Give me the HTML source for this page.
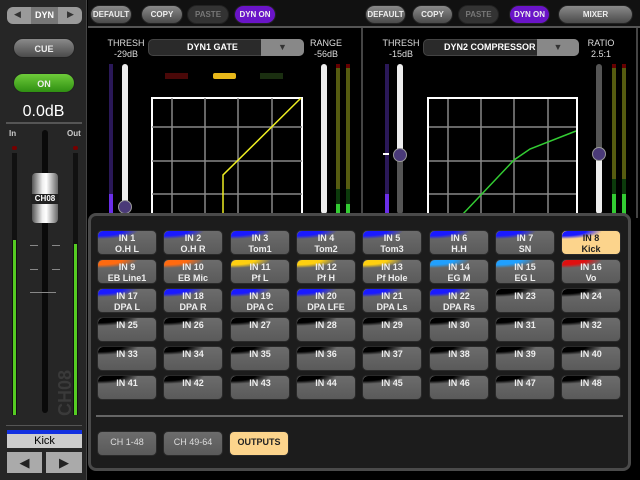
<!DOCTYPE html><html><head><style>
*{margin:0;padding:0;box-sizing:border-box}
body{width:640px;height:480px;background:#000;position:relative;overflow:hidden;font-family:"Liberation Sans",sans-serif;color:#fff}
.a{position:absolute}
.pill{position:absolute;border-radius:10px;font-size:9px;text-align:center;line-height:20px;color:#eee;background:linear-gradient(#8a8a8a,#4a4a4a);border:1px solid #222;font-weight:bold}
.grid{position:absolute;border:2px solid #fff;border-bottom:none}
.lbl{position:absolute;font-size:9px;text-align:center;color:#ddd;line-height:11px}
.b{position:absolute;width:60px;height:25px;border-radius:5px;background:linear-gradient(#6c6c6c,#5a5a5a);border:1px solid #2a2a2a;font-size:9px;font-weight:bold;text-align:center;line-height:11px;padding-top:2px;color:#eee;overflow:hidden}
.b i{position:absolute;left:0;top:0;width:40px;height:10px;border-radius:5px 0 0 0}
.b span{position:relative}
</style></head><body>
<div class="a" style="left:0;top:0;width:87px;height:480px;background:#262626;border-right:1px solid #444"></div>
<div class="a" style="left:7px;top:7px;width:75px;height:17px;border-radius:6px;background:#9a9a9a;"></div>
<div class="a" style="left:31px;top:7px;width:27px;height:17px;background:#777;font-size:9px;line-height:17px;text-align:center;font-weight:bold">DYN</div>
<div class="a" style="left:14px;top:9px;font-size:9px;color:#333">◀</div>
<div class="a" style="left:67px;top:9px;font-size:9px;color:#333">▶</div>
<div class="pill" style="left:13px;top:38px;width:62px;height:20px;">CUE</div>
<div class="pill" style="left:13px;top:73px;width:62px;height:20px;background:linear-gradient(#6ecb3a,#2f8f12)">ON</div>
<div class="a" style="left:0;top:103px;width:87px;text-align:center;font-size:16px">0.0dB</div>
<div class="a" style="left:6px;top:122px;width:76px;height:2px;background:#555"></div>
<div class="a" style="left:9px;top:129px;font-size:8px;font-weight:bold;color:#ccc">In</div>
<div class="a" style="left:67px;top:129px;font-size:8px;font-weight:bold;color:#ccc">Out</div>
<div class="a" style="left:12px;top:146px;width:5px;height:4px;background:#700;border-radius:2px"></div>
<div class="a" style="left:73px;top:146px;width:5px;height:4px;background:#700;border-radius:2px"></div>
<div class="a" style="left:12px;top:153px;width:5px;height:262px;background:#111"></div>
<div class="a" style="left:13px;top:240px;width:3px;height:175px;background:#5c2"></div>
<div class="a" style="left:73px;top:153px;width:5px;height:262px;background:#111"></div>
<div class="a" style="left:74px;top:244px;width:3px;height:171px;background:#5c2"></div>
<div class="a" style="left:42px;top:130px;width:6px;height:283px;background:#0a0a0a;border-radius:3px"></div>
<div class="a" style="left:30px;top:245px;width:8px;height:1px;background:#888"></div><div class="a" style="left:52px;top:245px;width:8px;height:1px;background:#888"></div>
<div class="a" style="left:30px;top:269px;width:8px;height:1px;background:#888"></div><div class="a" style="left:52px;top:269px;width:8px;height:1px;background:#888"></div>
<div class="a" style="left:30px;top:292px;width:26px;height:1px;background:#888"></div>
<div class="a" style="left:32px;top:173px;width:26px;height:50px;border-radius:4px;background:linear-gradient(90deg,#555,#eee 40%,#fff 55%,#666)"></div>
<div class="a" style="left:31px;top:194px;width:28px;height:10px;background:#222;font-size:8px;text-align:center;line-height:10px;font-weight:bold">CH08</div>
<div class="a" style="font-size:18px;font-weight:bold;color:#3a3a3a;transform:rotate(-90deg);transform-origin:left top;top:416px;left:55px">CH08</div>
<div class="a" style="left:6px;top:425px;width:76px;height:1px;background:#555"></div>
<div class="a" style="left:7px;top:430px;width:75px;height:4px;background:#1230e0"></div>
<div class="a" style="left:7px;top:434px;width:75px;height:14px;background:#ccc;color:#000;font-size:11px;text-align:center;line-height:14px">Kick</div>
<div class="a" style="left:7px;top:452px;width:35px;height:21px;background:#aaa;color:#222;font-size:13px;text-align:center;line-height:21px">◀</div>
<div class="a" style="left:46px;top:452px;width:36px;height:21px;background:#aaa;color:#222;font-size:13px;text-align:center;line-height:21px">▶</div>
<div class="a" style="left:88px;top:0;width:552px;height:28px;background:#111;border-bottom:2px solid #555"></div>
<div class="pill" style="left:90px;top:5px;width:42px;height:19px;line-height:17px;font-size:8px">DEFAULT</div>
<div class="pill" style="left:141px;top:5px;width:42px;height:19px;line-height:17px;font-size:8px">COPY</div>
<div class="pill" style="left:187px;top:5px;width:42px;height:19px;line-height:17px;font-size:8px;color:#777;background:#333">PASTE</div>
<div class="pill" style="left:234px;top:5px;width:42px;height:19px;line-height:17px;font-size:8px;background:#6a14c8">DYN ON</div>
<div class="pill" style="left:365px;top:5px;width:41px;height:19px;line-height:17px;font-size:8px">DEFAULT</div>
<div class="pill" style="left:412px;top:5px;width:41px;height:19px;line-height:17px;font-size:8px">COPY</div>
<div class="pill" style="left:458px;top:5px;width:41px;height:19px;line-height:17px;font-size:8px;color:#777;background:#333">PASTE</div>
<div class="pill" style="left:509px;top:5px;width:41px;height:19px;line-height:17px;font-size:8px;background:#6a14c8">DYN ON</div>
<div class="pill" style="left:558px;top:5px;width:75px;height:19px;line-height:17px;font-size:8px">MIXER</div>
<div class="a" style="left:361px;top:28px;width:2px;height:190px;background:#444"></div>
<div class="a" style="left:636px;top:28px;width:2px;height:190px;background:#444"></div>
<div class="lbl" style="left:104px;top:38px;width:44px">THRESH<br>-29dB</div>
<div class="lbl" style="left:306px;top:38px;width:40px">RANGE<br>-56dB</div>
<div class="a" style="left:148px;top:39px;width:156px;height:17px;border-radius:5px;background:#2a2a2a;border:1px solid #444;font-size:9px;font-weight:bold;line-height:15px;padding-left:38px">DYN1 GATE</div>
<div class="a" style="left:261px;top:39px;width:43px;height:17px;border-radius:0 5px 5px 0;background:#888;color:#333;font-size:9px;text-align:center;line-height:17px">▼</div>
<div class="a" style="left:109px;top:64px;width:4px;height:150px;background:#2a1858"></div>
<div class="a" style="left:109px;top:194px;width:4px;height:20px;background:#6a2ee8"></div>
<div class="a" style="left:122px;top:64px;width:6px;height:145px;background:#eee;border-radius:3px"></div>
<div class="a" style="left:118px;top:200px;width:14px;height:14px;border-radius:50%;background:#4a3a78;border:1px solid #999"></div>
<div class="a" style="left:165px;top:73px;width:23px;height:6px;background:#4a0808"></div>
<div class="a" style="left:213px;top:73px;width:23px;height:6px;background:#e8b81a;border-radius:2px"></div>
<div class="a" style="left:260px;top:73px;width:23px;height:6px;background:#1a2e10"></div>
<div class="a" style="left:321px;top:64px;width:6px;height:150px;background:#eee;border-radius:3px"></div>
<div class="a" style="left:336px;top:64px;width:4px;height:150px;background:linear-gradient(#600 0 4px,#555b10 4px 125px,#0c3a0c 125px 140px,#3c3 140px)"></div>
<div class="a" style="left:346px;top:64px;width:4px;height:150px;background:linear-gradient(#600 0 4px,#555b10 4px 125px,#0c3a0c 125px 140px,#3c3 140px)"></div>
<div class="grid" style="left:151px;top:97px;width:152px;height:120px"></div>
<svg class="a" style="left:0;top:0" width="640" height="220">
<g stroke="#888" stroke-width="1.5"><path d="M172 98V215M205 98V215M238 98V215M272 98V215M152 127H302M152 161H302M152 194H302"/>
<path d="M448 98V215M481 98V215M514 98V215M548 98V215M428 127H577M428 161H577M428 194H577"/></g>
<path d="M223 215V175L301 98" stroke="#ee2" stroke-width="1.5" fill="none"/>
<path d="M462 215L514 160L530 149L576 131" stroke="#3c3" stroke-width="1.5" fill="none"/>
</svg>
<div class="lbl" style="left:381px;top:38px;width:40px">THRESH<br>-15dB</div>
<div class="lbl" style="left:581px;top:38px;width:40px">RATIO<br>2.5:1</div>
<div class="a" style="left:423px;top:39px;width:156px;height:17px;border-radius:5px;background:#2a2a2a;border:1px solid #444;font-size:9px;font-weight:bold;line-height:15px;padding-left:20px">DYN2 COMPRESSOR</div>
<div class="a" style="left:537px;top:39px;width:42px;height:17px;border-radius:0 5px 5px 0;background:#888;color:#333;font-size:9px;text-align:center;line-height:17px">▼</div>
<div class="a" style="left:385px;top:64px;width:4px;height:150px;background:#2a1858"></div>
<div class="a" style="left:385px;top:194px;width:4px;height:20px;background:#6a2ee8"></div>
<div class="a" style="left:383px;top:153px;width:6px;height:2px;background:#fff"></div>
<div class="a" style="left:397px;top:64px;width:6px;height:150px;background:linear-gradient(#eee 90px,#555 90px);border-radius:3px"></div>
<div class="a" style="left:393px;top:148px;width:14px;height:14px;border-radius:50%;background:#4a3a78;border:1px solid #999"></div>
<div class="grid" style="left:427px;top:97px;width:151px;height:120px"></div>
<div class="a" style="left:596px;top:64px;width:6px;height:150px;background:linear-gradient(#555 90px,#eee 90px);border-radius:3px"></div>
<div class="a" style="left:592px;top:147px;width:14px;height:14px;border-radius:50%;background:#4a3a78;border:1px solid #999"></div>
<div class="a" style="left:612px;top:64px;width:4px;height:150px;background:linear-gradient(#600 0 4px,#555b10 4px 115px,#0c3a0c 115px 130px,#3c3 130px)"></div>
<div class="a" style="left:622px;top:64px;width:4px;height:150px;background:linear-gradient(#600 0 4px,#555b10 4px 115px,#0c3a0c 115px 130px,#3c3 130px)"></div>
<div class="a" style="left:88px;top:213px;width:543px;height:258px;background:#1c1c1c;border:3px solid #4a4a4a;border-radius:8px"></div>
<div class="a" style="left:96px;top:415px;width:527px;height:2px;background:#666"></div>
<div id="g"></div>
<div class="b" style="left:97px;top:431px;height:25px;line-height:21px;padding:0;font-weight:normal;color:#ddd">CH 1-48</div>
<div class="b" style="left:163px;top:431px;height:25px;line-height:21px;padding:0;font-weight:normal;color:#ddd">CH 49-64</div>
<div class="b" style="left:229px;top:431px;height:25px;line-height:21px;padding:0;background:#fcd48c;color:#222">OUTPUTS</div>
<script>
var n=["O.H L","O.H R","Tom1","Tom2","Tom3","H.H","SN","Kick","EB Line1","EB Mic","Pf L","Pf H","Pf Hole","EG M","EG L","Vo","DPA L","DPA R","DPA C","DPA LFE","DPA Ls","DPA Rs"];
var c=["#1a1aff","#1a1aff","#1a1aff","#1a1aff","#1a1aff","#1a1aff","#1a1aff","#1a1aff","#ff6a10","#ff6a10","#ffd010","#ffd010","#ffd010","#20a0ff","#20a0ff","#e01010","#1a1aff","#1a1aff","#1a1aff","#1a1aff","#1a1aff","#1a1aff"];
var h="";
for(var i=0;i<48;i++){var x=97+Math.round((i%8)*66.3),y=230+Math.floor(i/8)*29;
var col=c[i]||"#000",bg=i==7?"background:#fcd48c;color:#222;":"";
h+='<div class="b" style="left:'+x+'px;top:'+y+'px;'+bg+'"><i style="background:radial-gradient(ellipse 40px 8px at 0 0,'+col+' 60%,transparent 100%)"></i><span>IN '+(i+1)+(n[i]?'<br>'+n[i]:'')+'</span></div>';}
document.getElementById("g").innerHTML=h;
</script>
</body></html>
